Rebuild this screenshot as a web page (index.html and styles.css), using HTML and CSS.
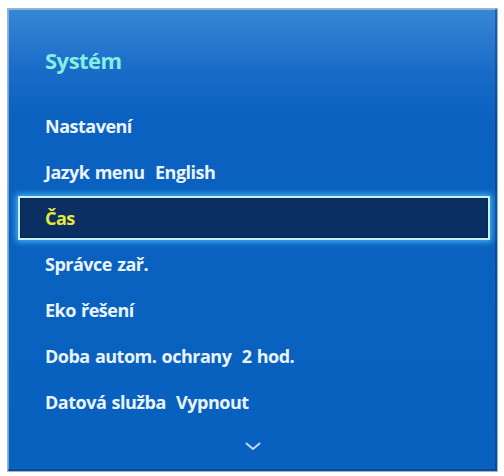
FILE: index.html
```html
<!DOCTYPE html>
<html>
<head>
<meta charset="utf-8">
<link rel="stylesheet" href="styles.css">
</head>
<body>
<div class="panel">
  <div class="title">Systém</div>
  <ul class="menu">
    <li class="item">Nastavení</li>
    <li class="item">Jazyk menu&nbsp; English</li>
    <li class="item selected"><span>Čas</span></li>
    <li class="item">Správce zař.</li>
    <li class="item">Eko řešení</li>
    <li class="item">Doba autom. ochrany&nbsp; 2 hod.</li>
    <li class="item">Datová služba&nbsp; Vypnout</li>
  </ul>
  <div class="more">
    <svg width="16" height="9" viewBox="0 0 16 9"><path d="M1.5 1.5 L8 7 L14.5 1.5" fill="none" stroke="#b9dcff" stroke-width="2" stroke-linecap="round" stroke-linejoin="round"/></svg>
  </div>
</div>
</body>
</html>
```

FILE: styles.css
```css
html, body {
  margin: 0;
  padding: 0;
  background: #ffffff;
}
body {
  padding: 8px 6px 4px 7px;
  font-family: "Open Sans", "Noto Sans", sans-serif;
}
.panel {
  box-sizing: border-box;
  width: 491px;
  height: 464px;
  background: linear-gradient(to bottom, #3787d6 0px, #1a6cc8 60px, #0a61c0 110px, #0861bf 100%);
  border: 1px solid #9fb4c8;
  box-shadow: inset -2px -2px 0 rgba(10, 50, 110, 0.45), inset 1px 1px 0 rgba(200, 225, 250, 0.5);
  display: flex;
  flex-direction: column;
}
.title {
  height: 94px;
  box-sizing: border-box;
  padding: 37px 0 0 37px;
  font-size: 22px;
  line-height: 28px;
  font-weight: 700;
  color: #84eee2;
  letter-spacing: -0.5px;
}
.menu {
  list-style: none;
  margin: 0;
  padding: 0 7px 0 10px;
}
.item {
  height: 46px;
  box-sizing: border-box;
  display: flex;
  align-items: center;
  padding-left: 27px;
  font-size: 18px;
  font-weight: 700;
  color: #eaf4ff;
  letter-spacing: -0.5px;
  word-spacing: 1px;
  white-space: pre;
}
.item.selected {
  padding-left: 0;
}
.item.selected span {
  flex: 1;
  height: 44px;
  box-sizing: border-box;
  display: flex;
  align-items: center;
  padding-left: 25px;
  background: #0b2f63;
  border: 2px solid #c4f2ff;
  box-shadow: 0 0 6px 2px rgba(90, 200, 255, 0.75), inset 0 0 2px rgba(0, 0, 0, 0.5);
  color: #e6e83a;
}
.more {
  display: flex;
  justify-content: center;
  padding-top: 17px;
}
```
